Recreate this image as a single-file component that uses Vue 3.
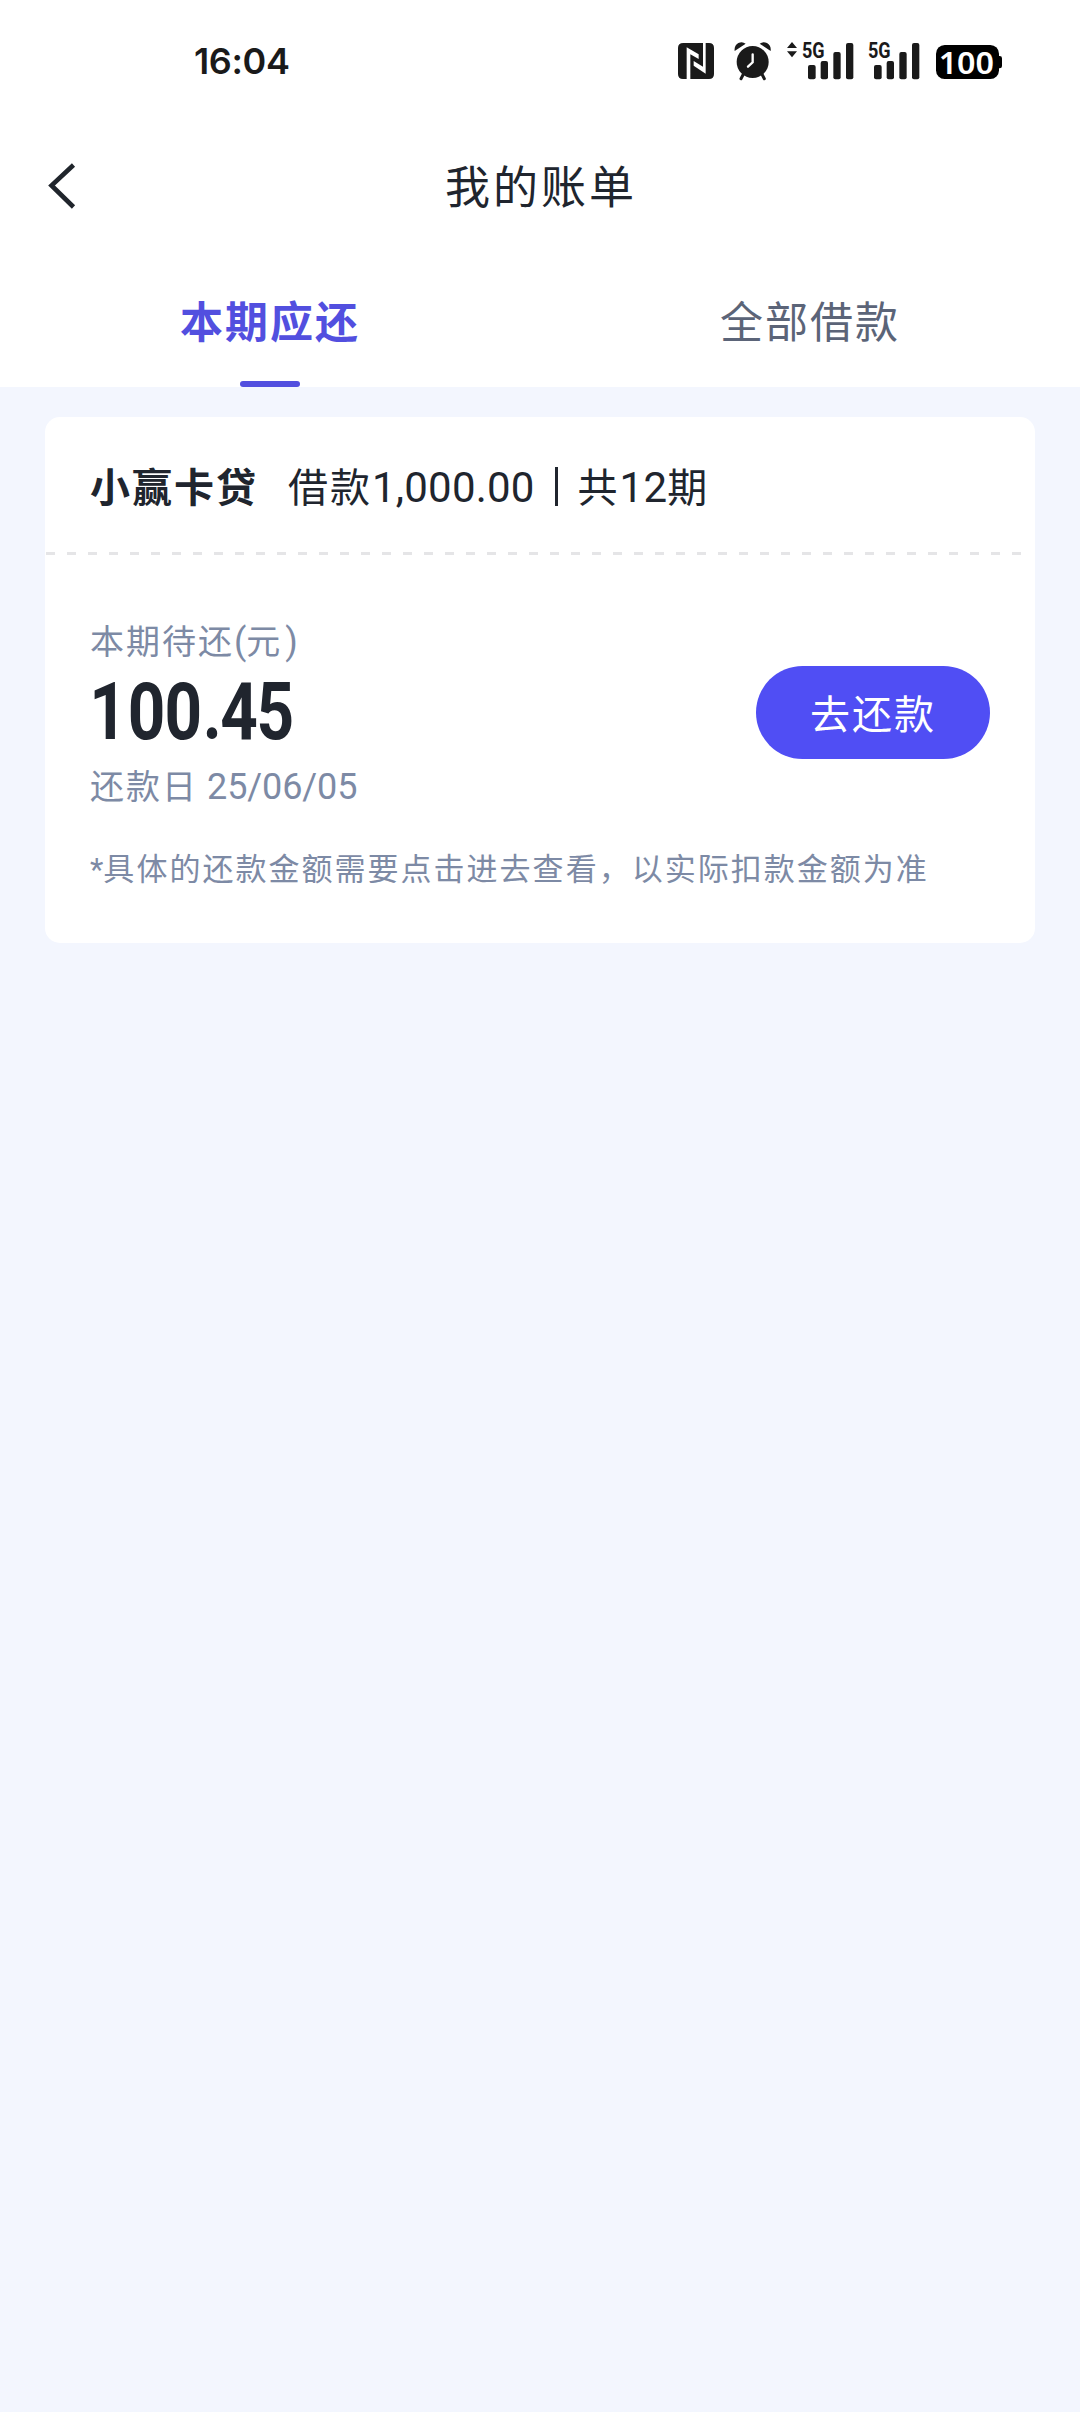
<script setup>
const bill = {
  name: '小赢卡贷',
  principal: '1,000.00',
  periods: 12,
  amount: '100.45',
  due: '25/06/05',
}
</script>

<template>
  <div class="page">
    <header class="top">
      <div class="status">
        <span class="time">16:04</span>
        <svg class="status-icons" viewBox="0 0 1080 240" fill="#1a1a1a">
          <!-- NFC -->
          <path d="M70 69H129V140L101 123V137L137 161V69H147Q162 69 162 84V162Q162 177 147 177H91V103L116 117V103L80 82V177H69Q54 177 54 162V84Q54 69 70 69Z" />
          <!-- alarm -->
          <circle cx="278" cy="126" r="48" />
          <path d="M224 93Q222 76 235 69Q247 63 257 71ZM332 93Q334 76 321 69Q309 63 299 71Z" />
          <path d="M250 163L243 176M306 163L313 176" stroke="#1a1a1a" stroke-width="9" stroke-linecap="round" />
          <path d="M278 103V127L264 140" stroke="#fff" stroke-width="7" stroke-linecap="round" fill="none" />
          <!-- signal -->
          <path d="M396 66L411 84H381ZM396 112L411 94H381Z" />
          <text x="426" y="113" textLength="68" lengthAdjust="spacingAndGlyphs" class="net">5G</text>
          <g id="bars">
            <rect x="444" y="135" width="23" height="43" rx="6" />
            <rect x="482" y="123" width="22" height="55" rx="6" />
            <rect x="520" y="96" width="22" height="82" rx="6" />
            <rect x="558" y="69" width="22" height="109" rx="6" />
          </g>
          <text x="624" y="113" textLength="68" lengthAdjust="spacingAndGlyphs" class="net">5G</text>
          <use href="#bars" x="198" />
          <!-- battery -->
          <rect x="828" y="75" width="189" height="102" rx="26" fill="#000" />
          <rect x="1008" y="108" width="18" height="37" rx="7" fill="#000" />
          <text x="836" y="161" textLength="166" lengthAdjust="spacingAndGlyphs" class="level">100</text>
        </svg>
      </div>
      <nav class="nav">
        <svg class="back" viewBox="0 0 30 48"><path d="M25.5 4L3.5 24.5L25.5 46" fill="none" stroke="#20252c" stroke-width="4.6" /></svg>
        <h1 class="title">我的账单</h1>
      </nav>
      <div class="tabs">
        <div class="tab active">本期应还</div>
        <div class="tab">全部借款</div>
      </div>
    </header>

    <main class="card">
      <div class="card-head">
        <strong class="name">{{ bill.name }}</strong>
        <span class="loan">借款<span class="num">{{ bill.principal }}</span></span>
        <i class="bar"></i>
        <span class="loan">共<span class="num">{{ bill.periods }}</span>期</span>
      </div>
      <div class="dash"></div>
      <div class="body">
        <div class="info">
          <div class="label">本期待还<span class="num">(</span>元<span class="num close">)</span></div>
          <svg class="amount" viewBox="-10 -18 260 98">
            <text transform="scale(.83 1)" y="59" x="-1 45.6 89.8 136 156.8 200.6">{{ bill.amount }}</text>
          </svg>
          <div class="label">还款日<span class="num due">{{ bill.due }}</span></div>
        </div>
        <button class="pay">去还款</button>
      </div>
      <p class="note"><span class="num">*</span>具体的还款金额需要点击进去查看，以实际扣款金额为准</p>
    </main>
  </div>
</template>

<style>
body { background: #f3f6fe; }
</style>

<style scoped>
.page {
  width: 1080px;
  min-height: 2412px;
  background: #f3f6fe;
  color: #20252e;
  font-family: "Noto Sans CJK SC", sans-serif;
}
.top { background: #fff; height: 387px; }
.status {
  height: 121px;
  display: flex;
  justify-content: space-between;
  align-items: flex-start;
  padding: 20px 60px 0 194px;
  box-sizing: border-box;
}
.time {
  font: 600 36px/82px Inter, sans-serif;
  letter-spacing: -.4px;
  color: #1a1a1a;
}
.status-icons { width: 360px; height: 80px; }
.net { font: 700 65px Roboto, sans-serif; }
.level { font: 600 91px "Noto Sans", sans-serif; fill: #fff; }
.nav {
  height: 132px;
  display: grid;
  grid-template-columns: 100px 1fr 100px;
  align-items: center;
}
.back { width: 30px; height: 48px; margin-left: 48px; margin-top: -4px; }
.title {
  margin: 0;
  padding: 0 0 6px 2px;
  font-size: 45px;
  font-weight: 400;
  letter-spacing: 3px;
  text-align: center;
}
.tabs { display: flex; height: 134px; }
.tab {
  flex: 1;
  position: relative;
  text-align: center;
  font-size: 43px;
  line-height: 132px;
  letter-spacing: 2px;
  color: #5b6478;
}
.active { color: #524fdf; font-weight: 700; }
.active::after {
  content: "";
  position: absolute;
  left: 240px;
  bottom: 0;
  width: 60px;
  height: 6px;
  border-radius: 3px;
  background: #524fdf;
}
.card {
  margin: 30px 45px 0;
  height: 526px;
  border-radius: 15px;
  background: #fff;
}
.card-head {
  height: 135px;
  display: flex;
  align-items: center;
  padding: 3px 45px 0;
  box-sizing: border-box;
  line-height: 60px;
  font-size: 40px;
  letter-spacing: 2px;
}
.name { margin-right: 30px; padding-bottom: 2px; }
.num { font-family: Roboto, sans-serif; }
.loan .num { font-size: 42px; letter-spacing: .2px; }
.bar { width: 3px; height: 39px; background: #20252e; margin: 0 20px 0 20px; }
.dash {
  height: 3px;
  margin: 0 9px 0 1px;
  background: repeating-linear-gradient(90deg, #e5e5e7 0 9px, transparent 9px 21px);
}
.body {
  display: flex;
  justify-content: space-between;
  align-items: center;
  padding: 0 45px;
  margin-top: 60px;
}
.info { display: flex; flex-direction: column; }
.label {
  font-size: 34px;
  line-height: 50px;
  letter-spacing: 2px;
  color: #7d8aa5;
}
.label .num { font-size: 36px; letter-spacing: -.1px; }
.label .close { margin-left: 3px; }
.label .due { margin-left: 9px; }
.amount { width: 260px; height: 98px; margin: -5px 0 0 -10px; fill: #20252e; }
.amount text { font: 700 79px Roboto, sans-serif; }
.pay {
  width: 234px;
  height: 93px;
  border: 0;
  padding: 0 0 2px;
  border-radius: 47px;
  background: #504ef4;
  color: #fff;
  font: 400 40px "Noto Sans CJK SC", sans-serif;
  letter-spacing: 2px;
  margin-top: -2px;
}
.note {
  margin: 32px 45px 0;
  font-size: 31px;
  line-height: 46px;
  letter-spacing: 2.02px;
  color: #7d8aa5;
  white-space: nowrap;
}
.note .num { letter-spacing: 0; }
</style>
